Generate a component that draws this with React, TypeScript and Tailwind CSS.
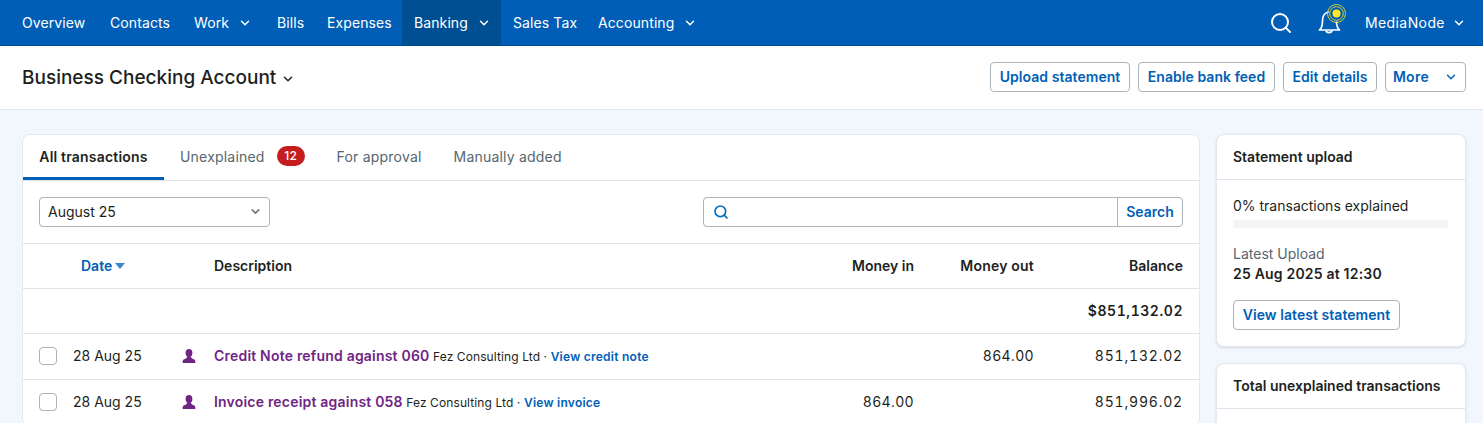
import { ChevronDown, Search } from 'lucide-react';

const navItems = [
  { label: 'Overview', width: 'w-[88px]' },
  { label: 'Contacts', width: 'w-[84px]' },
  { label: 'Work', width: 'w-[83px]', menu: true },
  { label: 'Bills', width: 'w-[50px]' },
  { label: 'Expenses', width: 'w-[87px]' },
  { label: 'Banking', width: 'w-[99px]', menu: true, active: true },
  { label: 'Sales Tax', width: 'w-[85px]' },
  { label: 'Accounting', width: 'w-[124px]', menu: true },
];

const rows = [
  { date: '28 Aug 25', title: 'Credit Note refund against 060', contact: 'Fez Consulting Ltd', link: 'View credit note', moneyIn: '', moneyOut: '864.00', balance: '851,132.02' },
  { date: '28 Aug 25', title: 'Invoice receipt against 058', contact: 'Fez Consulting Ltd', link: 'View invoice', moneyIn: '864.00', moneyOut: '', balance: '851,996.02' },
];

const cols = 'grid grid-cols-[34px_109px_32px_1fr_120px_120px_149px] items-center px-4 pb-[2px]';

const PersonIcon = () => (
  <svg width="14" height="14" viewBox="0 0 14 14" fill="#6f2583">
    <ellipse cx="7" cy="4" rx="3.4" ry="4" />
    <path d="M5 7.4 C5.2 9 3.6 9.6 2 10.3 C1 10.8 .6 12 .6 14 H13.4 C13.4 12 13 10.8 12 10.3 C10.4 9.6 8.8 9 9 7.4 Z" />
  </svg>
);

const BellIcon = () => (
  <svg width="30" height="30" viewBox="0 0 30 30" fill="none">
    <path d="M3.5 26 C6 24 6.5 21.5 6.5 17 C6.5 12 9 8.5 13 8 C17 8.5 20.5 12 20.5 17 C20.5 21.5 21 24 23.5 26 Z" stroke="#fff" strokeWidth="1.7" strokeLinejoin="round" />
    <path d="M10 26.5 C10.5 29.2 15.5 29.2 16 26.5" stroke="#fff" strokeWidth="1.7" />
    <circle cx="20.5" cy="9.5" r="8" fill="#005eb6" />
    <circle cx="20.5" cy="9.5" r="4" fill="#ffe81f" />
    <circle cx="20.5" cy="9.5" r="6.8" stroke="#ffe81f" strokeWidth=".8" />
    <circle cx="20.5" cy="9.5" r="9" stroke="#ffe81f" strokeWidth=".8" />
  </svg>
);

const OutlineButton = ({ children, w }: { children: React.ReactNode; w: string }) => (
  <button className={`${w} flex h-[30px] items-center justify-center rounded-[4px] border border-[#a9b4bc] bg-white text-[14px] font-semibold tracking-[0.05px] text-[#0060b6]`}>
    {children}
  </button>
);

export default function App() {
  return (
    <div className="h-screen overflow-hidden bg-[#f2f7fe] font-['Inter',sans-serif] text-[14px] text-[#1d1f21]">
      <nav className="flex h-[46px] items-center border-b border-[#004a8e] bg-[#005eb6] pl-[10px] pr-[17px] text-white">
        {navItems.map(item => (
          <div key={item.label} className={`flex h-full shrink-0 items-center gap-[9px] whitespace-nowrap px-3 tracking-[0.1px] ${item.width} ${item.active ? 'bg-[#004f92]' : ''}`}>
            <span>{item.label}</span>
            {item.menu && <ChevronDown size={14} strokeWidth={2.5} className="shrink-0" />}
          </div>
        ))}
        <div className="ml-auto flex items-center">
          <Search size={24} strokeWidth={2} className="mr-[23px]" />
          <div className="mb-[7px] mr-[19px]"><BellIcon /></div>
          <span className="mr-[8px] w-[79px] tracking-[0.4px]">MediaNode</span>
          <ChevronDown size={14} strokeWidth={2.5} />
        </div>
      </nav>

      <header className="flex h-[64px] items-center justify-between border-b border-[#e0e5ec] bg-white pl-[22px] pr-[17px]">
        <div className="flex items-center gap-[5px] pt-[2px]">
          <h1 className="text-[19px] font-medium">Business Checking Account</h1>
          <ChevronDown size={14} strokeWidth={2.5} />
        </div>
        <div className="mb-[2px] flex gap-2">
          <OutlineButton w="w-[140px]">Upload statement</OutlineButton>
          <OutlineButton w="w-[137px]">Enable bank feed</OutlineButton>
          <OutlineButton w="w-[94px]">Edit details</OutlineButton>
          <OutlineButton w="w-[81px]">
            <span className="mr-[15px] tracking-[0.3px]">More</span>
            <ChevronDown size={14} strokeWidth={2.5} />
          </OutlineButton>
        </div>
      </header>

      <main className="flex items-start gap-4 pl-[22px] pr-[17px] pt-6">
        <section className="flex-1 rounded-[8px] border border-[#e4e8ef] bg-white">
          <div className="flex h-[46px] border-b border-[#e0e5ec] tracking-[0.2px]">
            <div className="flex w-[141px] items-center justify-center border-b-[3px] border-[#005eb6] font-semibold">All transactions</div>
            <div className="flex items-center px-4 pb-[3px] text-[#56666f]">
              Unexplained
              <span className="ml-3 flex h-5 w-[28px] items-center justify-center rounded-full bg-[#c51d1d] text-[12px] font-medium text-white">12</span>
            </div>
            <div className="flex items-center px-4 pb-[3px] text-[#56666f]">For approval</div>
            <div className="flex items-center px-4 pb-[3px] text-[#56666f]">Manually added</div>
          </div>

          <div className="flex h-[63px] items-center justify-between border-b border-[#e0e5ec] px-4">
            <div className="flex h-[30px] w-[231px] items-center justify-between rounded-[4px] border border-[#a9b4bc] pb-px pl-2 pr-[7px]">
              <span>August 25</span>
              <ChevronDown size={13} strokeWidth={3} className="text-[#6b7a84]" />
            </div>
            <div className="flex h-[30px] w-[480px] items-center rounded-[4px] border border-[#a9b4bc]">
              <div className="flex-1 pl-[9px]">
                <Search size={16} strokeWidth={2.5} className="text-[#0070bd]" />
              </div>
              <div className="flex h-full w-[65px] items-center justify-center border-l border-[#a9b4bc] pb-px font-semibold text-[#0060b6]">Search</div>
            </div>
          </div>

          <div className={`${cols} h-[45px] border-b border-[#e0e5ec] font-semibold`}>
            <span />
            <span className="flex items-center pl-2 text-[#0060b6]">
              Date
              <span className="ml-[3px] mt-[2px] h-0 w-0 border-x-[5px] border-t-[6px] border-x-transparent border-t-[#3a86cf]" />
            </span>
            <span />
            <span>Description</span>
            <span className="text-right">Money in</span>
            <span className="text-right tracking-[0.2px]">Money out</span>
            <span className="text-right">Balance</span>
          </div>

          <div className={`${cols} h-[45px] border-b border-[#e0e5ec] font-semibold`}>
            <span className="col-start-7 text-right tracking-[0.55px] tabular-nums">$851,132.02</span>
          </div>

          {rows.map(row => (
            <div key={row.title} className={`${cols} h-[46px] border-b border-[#e0e5ec]`}>
              <span className="h-[18px] w-[18px] rounded-[4px] border border-[#a9b4bc] bg-white" />
              <span>{row.date}</span>
              <PersonIcon />
              <span className="whitespace-nowrap text-[12px] tracking-[0.1px]">
                <span className="text-[14px] font-semibold tracking-[0.2px] text-[#6f2583]">{row.title}</span> {row.contact} · <span className="font-semibold tracking-[0.25px] text-[#0060b6]">{row.link}</span>
              </span>
              <span className="text-right tracking-[0.35px] tabular-nums">{row.moneyIn}</span>
              <span className="text-right tracking-[0.35px] tabular-nums">{row.moneyOut}</span>
              <span className="text-right tracking-[0.8px] tabular-nums">{row.balance}</span>
            </div>
          ))}
        </section>

        <aside className="flex w-[250px] shrink-0 flex-col gap-4 leading-5">
          <div className="rounded-[8px] border border-[#e4e8ef] bg-white shadow-sm">
            <div className="flex h-[45px] items-center border-b border-[#e0e5ec] px-4 font-semibold">Statement upload</div>
            <div className="px-4 pb-4 pt-4">
              <p>0% transactions explained</p>
              <div className="mt-1 h-2 rounded-full bg-[#f2f4f6]" />
              <p className="mt-4 text-[#56666f]">Latest Upload</p>
              <p className="font-semibold tracking-[0.2px]">25 Aug 2025 at 12:30</p>
              <div className="mt-4">
                <OutlineButton w="w-[167px]">View latest statement</OutlineButton>
              </div>
            </div>
          </div>
          <div className="rounded-[8px] border border-[#e4e8ef] bg-white shadow-sm">
            <div className="flex h-[45px] items-center border-b border-[#e0e5ec] px-4 font-semibold">Total unexplained transactions</div>
            <div className="h-24" />
          </div>
        </aside>
      </main>
    </div>
  );
}
